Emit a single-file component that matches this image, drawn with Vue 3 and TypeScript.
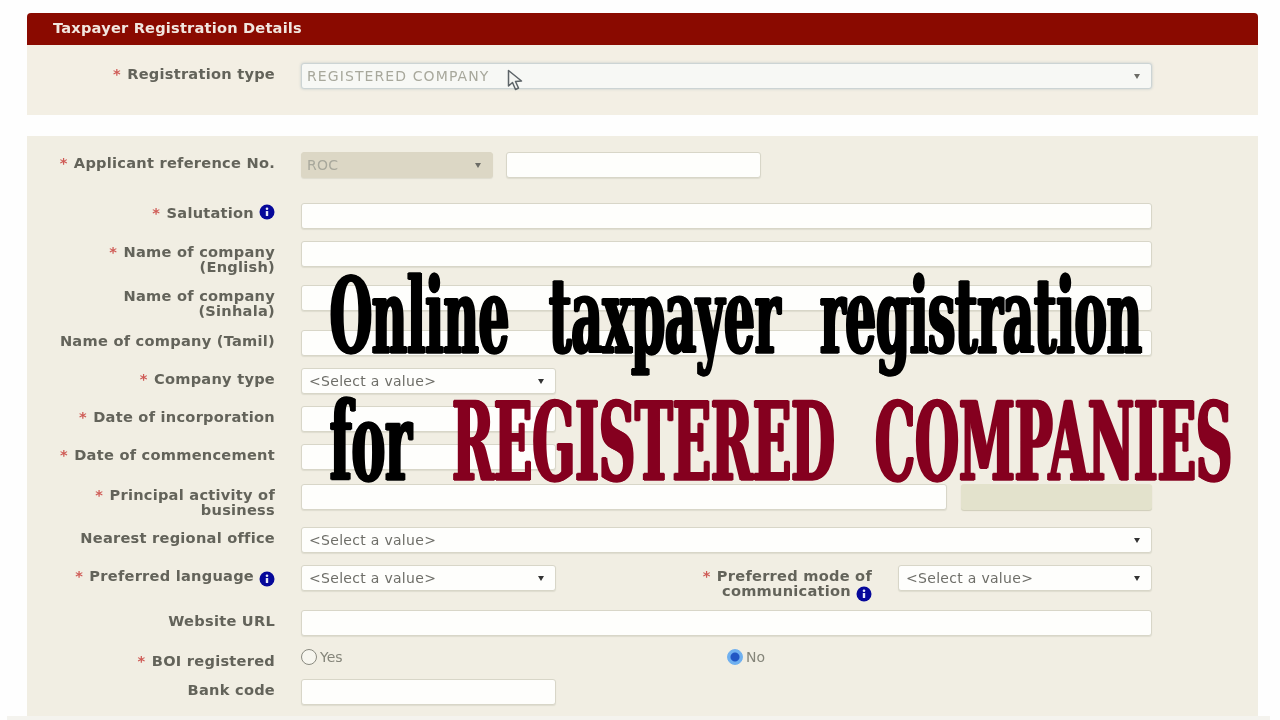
<script setup lang="ts">
type Kind = 'text' | 'select' | 'applicant' | 'date' | 'short' | 'principal' | 'pref' | 'radio' | 'bank'
interface Row {
  label: string[]
  required?: boolean
  info?: boolean
  lift?: boolean
  kind: Kind
  gap: number
}

const rows: Row[] = [
  { label: ['Applicant reference No.'], required: true, kind: 'applicant', gap: 16 },
  { label: ['Salutation'], required: true, info: true, lift: true, kind: 'text', gap: 25 },
  { label: ['Name of company', '(English)'], required: true, kind: 'text', gap: 12 },
  { label: ['Name of company', '(Sinhala)'], kind: 'text', gap: 18 },
  { label: ['Name of company (Tamil)'], kind: 'text', gap: 19 },
  { label: ['Company type'], required: true, kind: 'short', gap: 12 },
  { label: ['Date of incorporation'], required: true, kind: 'date', gap: 12 },
  { label: ['Date of commencement'], required: true, kind: 'date', gap: 12 },
  { label: ['Principal activity of', 'business'], required: true, kind: 'principal', gap: 14 },
  { label: ['Nearest regional office'], kind: 'select', gap: 17 },
  { label: ['Preferred language'], required: true, info: true, kind: 'pref', gap: 12 },
  { label: ['Website URL'], kind: 'text', gap: 19 },
  { label: ['BOI registered'], required: true, kind: 'radio', gap: 14 },
  { label: ['Bank code'], kind: 'bank', gap: 3 },
]
</script>

<template>
  <div class="page">
    <div class="sheet">
      <section class="top">
        <h1 class="bar">Taxpayer Registration Details</h1>
        <div class="top-body">
          <div class="row">
            <div class="label"><span class="star">*</span> Registration type</div>
            <div class="ctrl field focus select">
              <span class="muted reg">REGISTERED COMPANY</span><i class="arrow grey"></i>
              <svg class="cursor" viewBox="0 0 18 22" width="18" height="22">
                <path d="M1.5 1.5 L1.5 17 L5.5 13.5 L8.5 20.5 L11.5 19 L8.5 12.5 L14.5 12 Z" fill="#f4f5f2" stroke="#5d6468" stroke-width="1.5" stroke-linejoin="round" />
              </svg>
            </div>
          </div>
        </div>
      </section>

      <section class="main">
        <div v-for="r in rows" :key="r.label[0]" class="row" :style="{ marginTop: r.gap + 'px' }">
          <div class="label" :class="{ lift: r.lift }">
            <div v-for="(line, i) in r.label" :key="line">
              <span v-if="r.required && i === 0" class="star">* </span>{{ line }}<svg v-if="r.info && i === r.label.length - 1" class="info" :class="{ low: r.kind === 'pref' }" viewBox="0 0 16 16" width="16" height="16"><circle cx="8" cy="8" r="7.5" fill="#06089a" /><circle cx="8" cy="4.8" r="1.3" fill="#e6eaf8" /><rect x="6.8" y="7" width="2.4" height="5" rx="0.6" fill="#e6eaf8" /></svg>
            </div>
          </div>

          <div v-if="r.kind === 'text'" class="ctrl field"></div>
          <div v-else-if="r.kind === 'select'" class="ctrl field select"><span class="val">&lt;Select a value&gt;</span><i class="arrow"></i></div>
          <div v-else-if="r.kind === 'short'" class="ctrl field select w255"><span class="val">&lt;Select a value&gt;</span><i class="arrow"></i></div>
          <div v-else-if="r.kind === 'bank'" class="ctrl field w255"></div>
          <div v-else-if="r.kind === 'date'" class="ctrl field w255"></div>

          <div v-else-if="r.kind === 'applicant'" class="ctrl group">
            <div class="field select disabled w192"><span class="muted">ROC</span><i class="arrow grey"></i></div>
            <div class="field w255"></div>
          </div>

          <div v-else-if="r.kind === 'principal'" class="ctrl group g14">
            <div class="field grow"></div>
            <div class="btn"></div>
          </div>

          <div v-else-if="r.kind === 'pref'" class="ctrl group pref">
            <div class="field select w255"><span class="val">&lt;Select a value&gt;</span><i class="arrow"></i></div>
            <div class="label second"><div><span class="star">* </span>Preferred mode of</div><div>communication<svg class="info low" viewBox="0 0 16 16" width="16" height="16"><circle cx="8" cy="8" r="7.5" fill="#06089a" /><circle cx="8" cy="4.8" r="1.3" fill="#e6eaf8" /><rect x="6.8" y="7" width="2.4" height="5" rx="0.6" fill="#e6eaf8" /></svg></div></div>
            <div class="field select w254"><span class="val">&lt;Select a value&gt;</span><i class="arrow"></i></div>
          </div>

          <div v-else-if="r.kind === 'radio'" class="ctrl radios">
            <div class="opt yes"><i class="radio"></i>Yes</div>
            <div class="opt"><i class="radio on"></i>No</div>
          </div>
        </div>
      </section>
    </div>
    <div class="strip"></div>

    <div class="headline">
      <div class="line one">Online taxpayer registration</div>
      <div class="line two">for <span class="red">REGISTERED COMPANIES</span></div>
    </div>
  </div>
</template>

<style>
html, body { margin: 0; background: #fff; }
</style>

<style scoped>
.page {
  position: relative;
  width: 1280px;
  height: 720px;
  overflow: hidden;
  background: #fefefe;
  font-family: "DejaVu Sans", sans-serif;
}
.sheet {
  padding: 13px 22px 0 27px;
  filter: blur(0.5px);
}
.bar {
  margin: 0;
  height: 32px;
  box-sizing: border-box;
  padding: 6px 0 0 26px;
  background: #8a0a00;
  border-radius: 4px 4px 0 0;
  color: #f1e6df;
  font-size: 14.6px;
  line-height: 17px;
  letter-spacing: 0.2px;
  font-weight: 700;
}
.top-body {
  height: 70px;
  box-sizing: border-box;
  padding-top: 18px;
  background: #f3efe4;
}
.main {
  margin-top: 21px;
  height: 580px;
  background: #f1eee3;
  overflow: hidden;
  display: flow-root;
}
.row {
  display: grid;
  grid-template-columns: 248px 851px;
  column-gap: 26px;
  align-items: start;
  height: 26px;
}
.label {
  padding-top: 2.5px;
  text-align: right;
  font-size: 14.6px;
  line-height: 15px;
  letter-spacing: 0.25px;
  font-weight: 700;
  color: #63635a;
  white-space: nowrap;
}
.lift { padding-top: 0.5px; }
.star { color: #cf5a55; margin-right: 1px; }
.ctrl { min-height: 26px; }
.field {
  height: 26px;
  box-sizing: border-box;
  background: #fefefc;
  border: 1px solid #d8d6c8;
  border-radius: 3px;
  box-shadow: 0 1px 1px #dedccf;
  display: flex;
  align-items: center;
  padding: 0 11px 0 7px;
  font-size: 14px;
}
.focus {
  background: #f7f8f5;
  border-color: #ccd4d4;
  box-shadow: 0 0 3px #c0c8c8;
  position: relative;
}
.select { justify-content: space-between; }
.disabled { background: #dcd7c5; border-color: #dcd7c5; padding-left: 5px; }
.w192 { width: 192px; }
.w255 { width: 255px; }
.w254 { width: 254px; }
.grow { flex: 1; }
.muted { color: #a8a89c; font-size: 14px; letter-spacing: 0.3px; }
.reg { margin-left: -2px; letter-spacing: 1.1px; }
.val { color: #6e6e68; letter-spacing: 0.3px; }
.arrow {
  width: 0;
  height: 0;
  border-left: 3.5px solid transparent;
  border-right: 3.5px solid transparent;
  border-top: 5px solid #333;
}
.arrow.grey { border-top-color: #6c6c66; }
.cursor { position: absolute; left: 205px; top: 5px; }
.info { margin-left: 5px; vertical-align: -2px; }
.info.low { vertical-align: -6px; }
.group { display: flex; column-gap: 13px; }
.g14 { column-gap: 14px; }
.btn {
  width: 191px;
  height: 26px;
  background: #e3e2cc;
  border-radius: 3px;
  box-shadow: 0 1px 1px #cfcdb9;
}
.pref { column-gap: 0; }
.second { width: 342px; box-sizing: border-box; padding-right: 26px; }
.radios { display: flex; min-height: 16px; margin-top: -1px; }
.opt {
  display: flex;
  align-items: center;
  height: 16px;
  font-size: 14px;
  line-height: 16px;
  color: #85857a;
}
.yes { width: 426px; }
.radio {
  width: 16px;
  height: 16px;
  box-sizing: border-box;
  margin-right: 3px;
  border: 1px solid #8a8a80;
  border-radius: 50%;
  background: #f7f6ef;
}
.radio.on {
  background: radial-gradient(circle, #2257c4 0 4px, #6fb0f0 5px);
  border-color: #6fb0f0;
}
.strip {
  position: absolute;
  left: 7px;
  right: 10px;
  top: 716px;
  height: 4px;
  background: #f4f3ee;
}
.headline {
  position: absolute;
  left: 330px;
  top: 0;
  font-family: "DejaVu Serif", serif;
  font-weight: 700;
  color: #000;
  white-space: nowrap;
}
.line {
  position: absolute;
  left: 0;
  line-height: 130px;
  transform-origin: 0 0;
  -webkit-text-stroke: 1.5px currentColor;
  text-shadow: 3px 0 currentColor, -3px 0 currentColor;
}
.one { top: 251px; font-size: 105px; word-spacing: 50px; transform: scaleX(0.459); }
.two { top: 377px; font-size: 108px; word-spacing: 49px; transform: scaleX(0.466); }
.red { color: #85001f; }
</style>
